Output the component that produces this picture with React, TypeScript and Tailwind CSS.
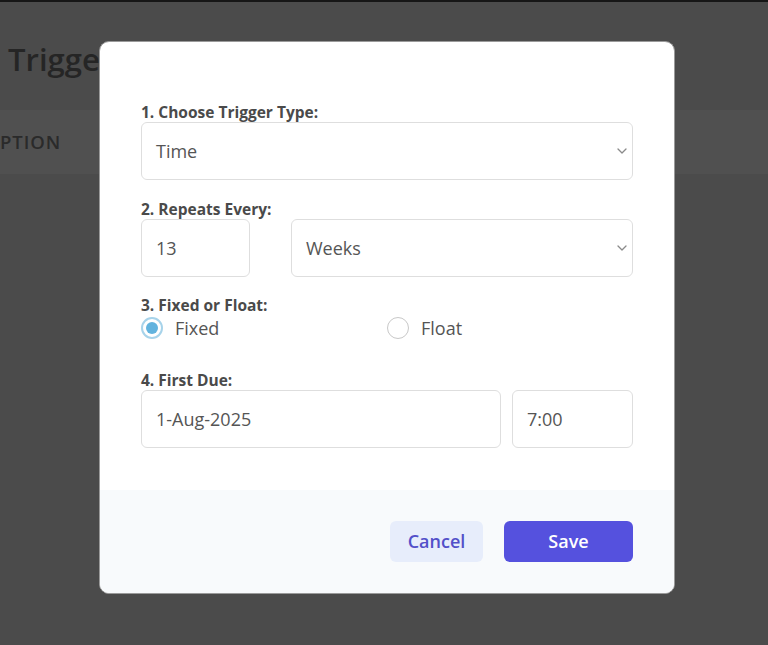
import { ReactNode } from "react";

const font = { fontFamily: '"Open Sans", "Noto Sans", sans-serif' };

function Label({ children }: { children: ReactNode }) {
  return (
    <div className="text-[15.5px] leading-[20px] font-bold text-[#4a4a4a]">
      {children}
    </div>
  );
}

function Chevron() {
  return (
    <svg width="10" height="6" viewBox="0 0 10 6" className="shrink-0">
      <path d="M1 1l4 4 4-4" fill="none" stroke="#8a8a8a" strokeWidth="1.3" strokeLinecap="round" strokeLinejoin="round" />
    </svg>
  );
}

function Field({ value, select, className = "" }: { value: string; select?: boolean; className?: string }) {
  return (
    <div
      className={`h-[58px] border border-[#dedede] rounded-md bg-white flex items-center justify-between pl-[14px] pr-[5px] text-[18px] text-[#555] ${className}`}
    >
      <span>{value}</span>
      {select && <Chevron />}
    </div>
  );
}

function Radio({ label, checked }: { label: string; checked?: boolean }) {
  return (
    <div className="flex items-center gap-3">
      {checked ? (
        <div className="w-[22px] h-[22px] rounded-full border-2 border-[#a7d3ea] flex items-center justify-center">
          <div className="w-[12px] h-[12px] rounded-full bg-[#62b3de]" />
        </div>
      ) : (
        <div className="w-[22px] h-[22px] rounded-full border border-[#c8c8c8] bg-white" />
      )}
      <span className="text-[18px] text-[#555]">{label}</span>
    </div>
  );
}

export default function App() {
  return (
    <div className="relative w-[768px] h-[645px] overflow-hidden bg-[#4b4b4b]" style={font}>
      {/* page behind the overlay */}
      <div className="h-[2px] bg-[#161616]" />
      <div className="pl-[8px] pt-[34px] h-[108px] text-[31px] font-semibold text-[#252525]">Trigger</div>
      <div className="h-[64px] bg-[#505050] flex items-center text-[18.5px] font-semibold tracking-wider text-[#2a2a2a]">
        PTION
      </div>

      {/* modal */}
      <div className="absolute left-[99px] top-[41px] w-[576px] h-[553px] bg-white rounded-[10px] border border-[#9a9a9a] overflow-hidden flex flex-col">
        <div className="px-[41px] pt-[60px] flex-1">
          <Label>1. Choose Trigger Type:</Label>
          <Field value="Time" select />

          <div className="mt-[19px]">
            <Label>2. Repeats Every:</Label>
            <div className="flex gap-[41px]">
              <Field value="13" className="w-[109px]" />
              <Field value="Weeks" select className="flex-1" />
            </div>
          </div>

          <div className="mt-[18px]">
            <Label>3. Fixed or Float:</Label>
            <div className="flex h-[26px] items-center">
              <div className="w-[246px]">
                <Radio label="Fixed" checked />
              </div>
              <Radio label="Float" />
            </div>
          </div>

          <div className="mt-[29px]">
            <Label>4. First Due:</Label>
            <div className="flex gap-[11px]">
              <Field value="1-Aug-2025" className="flex-1" />
              <Field value="7:00" className="w-[121px]" />
            </div>
          </div>
        </div>

        <div className="h-[103px] bg-[#f8fafc] flex items-center justify-end gap-[21px] px-[41px]">
          <button className="w-[93px] h-[41px] rounded-md bg-[#e7edfb] text-[18px] font-semibold text-[#5250c9]">
            Cancel
          </button>
          <button className="w-[129px] h-[41px] rounded-md bg-[#5551de] text-[18px] font-semibold text-white">
            Save
          </button>
        </div>
      </div>
    </div>
  );
}
